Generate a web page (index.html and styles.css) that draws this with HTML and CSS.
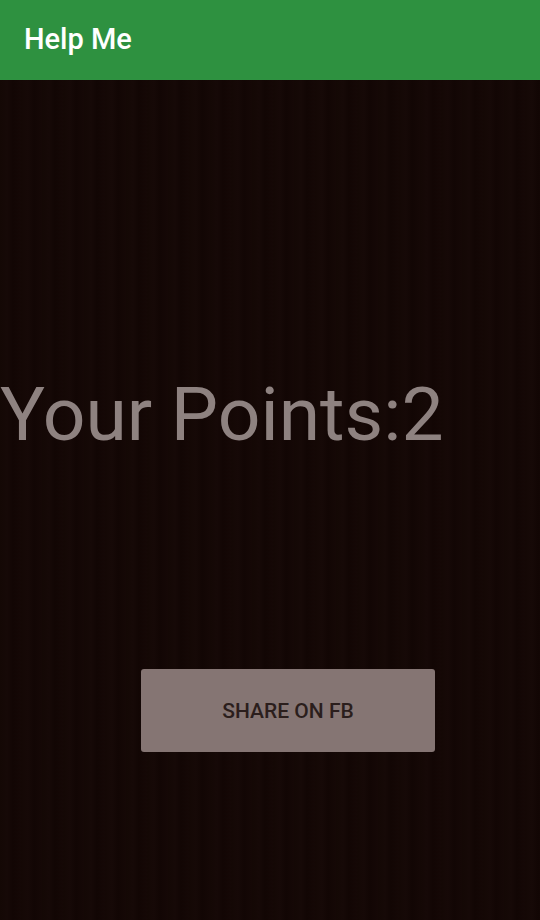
FILE: index.html
```html
<!DOCTYPE html>
<html>
<head>
<meta charset="utf-8">
<link rel="stylesheet" href="styles.css">
</head>
<body>
<header class="appbar"><h1 class="title">Help Me</h1></header>
<main class="content">
  <p class="points">Your Points:2</p>
  <button class="share">SHARE ON FB</button>
</main>
</body>
</html>
```
FILE: styles.css
```css
html, body { margin: 0; padding: 0; }
body {
  width: 540px;
  height: 920px;
  background: #140805;
  font-family: Roboto, "Noto Sans", sans-serif;
  display: flex;
  flex-direction: column;
  overflow: hidden;
}
.appbar {
  height: 80px;
  background: #2e9140;
  display: flex;
  align-items: center;
  padding-left: 24px;
  flex-shrink: 0;
}
.title {
  margin: 0 0 2px 0;
  color: #ffffff;
  font-size: 29px;
  font-weight: 500;
}
.content {
  flex: 1;
  display: flex;
  flex-direction: column;
  background: repeating-linear-gradient(90deg, #140805 0px, #160907 7px, #120604 13px, #150806 21px);
}
.points {
  margin: 287px 0 0 0;
  font-size: 75px;
  line-height: 94px;
  color: #8e8280;
  white-space: nowrap;
}
.share {
  margin: 208px 0 0 141px;
  width: 294px;
  height: 83px;
  border: none;
  border-radius: 3px;
  background: #857573;
  color: #2b1e1c;
  font-family: Roboto, sans-serif;
  font-size: 21px;
  font-weight: 500;
  padding: 0;
}
```
